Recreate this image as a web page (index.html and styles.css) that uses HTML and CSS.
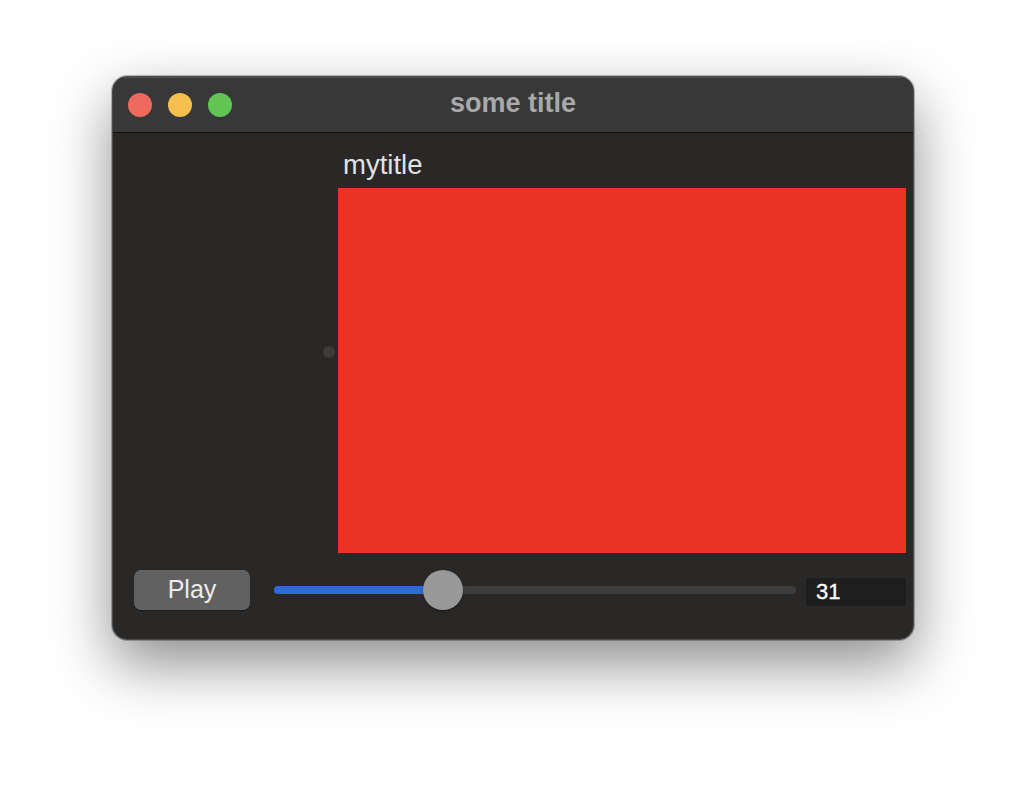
FILE: index.html
```html
<!DOCTYPE html>
<html>
<head>
<meta charset="utf-8">
<link rel="stylesheet" href="styles.css">
</head>
<body>
<div class="stage">
  <div class="window">
    <div class="titlebar">
      <div class="lights">
        <span class="light red"></span>
        <span class="light yellow"></span>
        <span class="light green"></span>
      </div>
      <div class="title">some title</div>
    </div>
    <div class="content">
      <div class="main">
        <div class="side">
          <span class="handle"></span>
        </div>
        <div class="panel">
          <div class="label">mytitle</div>
          <div class="canvas"></div>
        </div>
      </div>
      <div class="controls">
        <button class="play">Play</button>
        <div class="slider">
          <div class="track"></div>
          <div class="fill" style="width: 169px"></div>
          <div class="thumb" style="left: 149px"></div>
        </div>
        <div class="value">31</div>
      </div>
    </div>
  </div>
</div>
</body>
</html>
```
FILE: styles.css
```css
html, body {
  margin: 0;
  padding: 0;
  background: #ffffff;
}
body {
  font-family: "Liberation Sans", Arial, sans-serif;
}
.stage {
  padding: 76px 0 0 112px;
  height: 712px;
}
.window {
  box-sizing: border-box;
  width: 802px;
  height: 564px;
  border: 1px solid #4c4c4c;
  border-radius: 15px;
  overflow: hidden;
  background: #292827;
  box-shadow: 0 24px 60px rgba(0, 0, 0, 0.45), 0 0 0 1px rgba(0,0,0,0.25);
  display: flex;
  flex-direction: column;
}
.titlebar {
  position: relative;
  height: 55px;
  background: #383838;
  border-bottom: 1px solid #0e0e0e;
  box-shadow: inset 0 1px 0 rgba(255,255,255,0.12);
  display: flex;
  align-items: center;
  flex-shrink: 0;
}
.lights {
  display: flex;
  gap: 16px;
  padding-left: 15px;
  padding-top: 1px;
}
.light {
  width: 24px;
  height: 24px;
  border-radius: 50%;
  display: block;
}
.red { background: #ee6a5e; }
.yellow { background: #f5bf4f; }
.green { background: #61c554; }
.title {
  position: absolute;
  left: 0;
  right: 0;
  top: 0;
  bottom: 2px;
  display: flex;
  align-items: center;
  justify-content: center;
  color: #a9a9a9;
  font-weight: bold;
  font-size: 27px;
  pointer-events: none;
}
.content {
  flex: 1;
  display: flex;
  flex-direction: column;
}
.main {
  height: 437px;
  display: flex;
}
.side {
  width: 225px;
  display: flex;
  align-items: center;
  justify-content: flex-end;
}
.handle {
  width: 12px;
  height: 12px;
  border-radius: 50%;
  background: #3c3b3a;
  margin-right: 3px;
}
.panel {
  width: 568px;
  display: flex;
  flex-direction: column;
}
.label {
  height: 55px;
  box-sizing: border-box;
  padding: 17px 0 0 5px;
  color: #e2e2e2;
  font-size: 27.5px;
  line-height: 30px;
}
.canvas {
  height: 365px;
  background: #e93323;
}
.controls {
  height: 40px;
  display: flex;
  align-items: center;
  padding-left: 21px;
}
.play {
  box-sizing: border-box;
  width: 116px;
  height: 40px;
  border: none;
  border-radius: 7px;
  background: #616161;
  color: #ececec;
  font-family: "Liberation Sans", Arial, sans-serif;
  font-size: 25px;
  padding: 0 0 2px 0;
  box-shadow: 0 1px 1px rgba(0,0,0,0.3);
}
.slider {
  position: relative;
  width: 522px;
  height: 40px;
  margin-left: 24px;
}
.track {
  position: absolute;
  left: 0;
  right: 0;
  top: 16px;
  height: 8px;
  border-radius: 4px;
  background: #3d3d3d;
}
.fill {
  position: absolute;
  left: 0;
  top: 16px;
  height: 8px;
  border-radius: 4px;
  background: #2f68df;
}
.thumb {
  position: absolute;
  top: 0;
  width: 40px;
  height: 40px;
  border-radius: 50%;
  background: #999999;
  box-shadow: 0 1px 2px rgba(0,0,0,0.4);
}
.value {
  box-sizing: border-box;
  width: 100px;
  height: 28px;
  margin-left: 10px;
  margin-top: 4px;
  background: #1e1e1e;
  color: #ffffff;
  font-size: 22px;
  line-height: 28px;
  padding-left: 10px;
  -webkit-text-stroke: 0.3px #ffffff;
}
```
